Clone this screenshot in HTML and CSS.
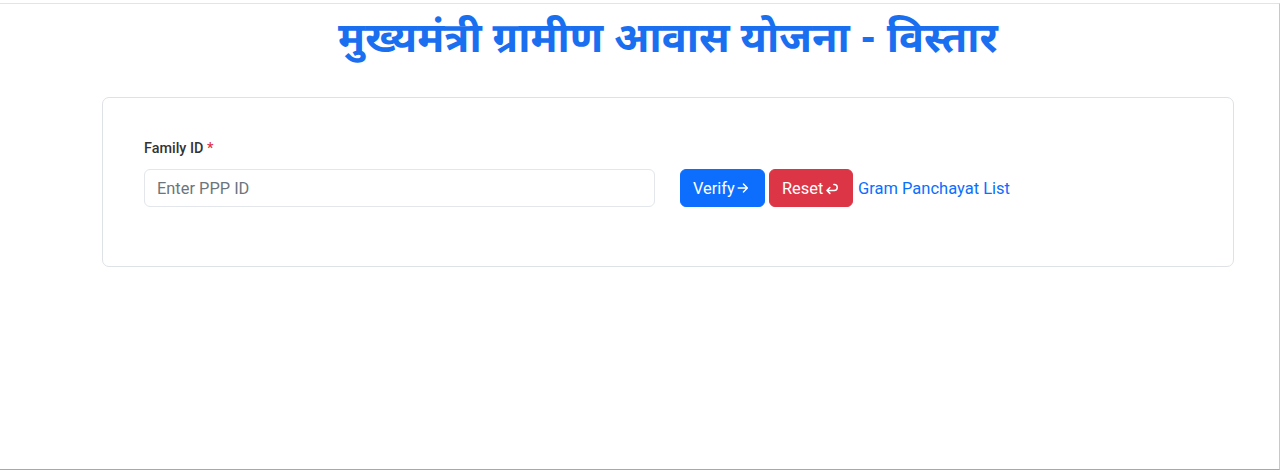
FILE: index.html
```html
<!DOCTYPE html>
<html lang="hi">
<head>
<meta charset="utf-8">
<title>मुख्यमंत्री ग्रामीण आवास योजना - विस्तार</title>
<link rel="stylesheet" href="styles.css">
</head>
<body>
<div class="frame">
  <h1 class="title">मुख्यमंत्री ग्रामीण आवास योजना - विस्तार</h1>
  <div class="card">
    <label class="label" for="ppp">Family ID <span class="req">*</span></label>
    <div class="row">
      <input id="ppp" class="input" type="text" placeholder="Enter PPP ID">
      <div class="actions">
        <button class="btn btn-blue">Verify<svg class="ic" viewBox="0 0 16 16" width="14" height="14"><path d="M2.5 8h10M8.5 3.5 13 8l-4.5 4.5" fill="none" stroke="currentColor" stroke-width="1.6" stroke-linecap="round" stroke-linejoin="round"/></svg></button>
        <button class="btn btn-red">Reset<svg class="ic" viewBox="0 0 16 16" width="16" height="16"><path d="M10 4.5h0.5a3 3 0 0 1 0 6H3M6 7.5 3 10.5l3 3" fill="none" stroke="currentColor" stroke-width="1.5" stroke-linecap="round" stroke-linejoin="round"/></svg></button>
        <a class="link" href="#">Gram Panchayat List</a>
      </div>
    </div>
  </div>
</div>
</body>
</html>
```
FILE: styles.css
```css
html, body {
  margin: 0;
  padding: 0;
  background: #fff;
}
body {
  font-family: Roboto, "Liberation Sans", sans-serif;
  color: #212529;
}
.frame {
  width: 1279px;
  height: 465px;
  margin-top: 3px;
  border-top: 1px solid #e4e2f2;
  border-right: 1px solid #c8c8c8;
  border-bottom: 1px solid #a8a8a8;
  box-sizing: content-box;
  overflow: hidden;
}
.title {
  margin: 12px 0 0 102px;
  width: 1132px;
  text-align: center;
  font-family: "Noto Sans Devanagari", "Noto Sans", "Lohit Devanagari", sans-serif;
  font-weight: 700;
  font-size: 41.6px;
  line-height: 52px;
  color: #1a6ff0;
}
.card {
  margin: 29px 0 0 102px;
  width: 1132px;
  height: 170px;
  box-sizing: border-box;
  border: 1px solid #dee2e6;
  border-radius: 7px;
  padding: 41px 41px 0;
}
.label {
  display: block;
  font-size: 14.4px;
  font-weight: 500;
  color: #333;
  line-height: 20px;
  margin-bottom: 10px;
}
.req { color: #dc3545; }
.row {
  display: flex;
  align-items: center;
}
.input {
  width: 511px;
  height: 38px;
  box-sizing: border-box;
  border: 1px solid #e3e6ea;
  border-radius: 6px;
  padding: 0 12px;
  font-family: Roboto, "Liberation Sans", sans-serif;
  font-size: 16.4px;
  color: #212529;
  outline: none;
}
.input::placeholder { color: #6c757d; }
.actions {
  display: flex;
  align-items: center;
  gap: 4px;
  margin-left: 25px;
}
.btn {
  display: inline-flex;
  align-items: center;
  height: 38px;
  box-sizing: border-box;
  border: 1px solid transparent;
  border-radius: 6px;
  padding: 0 12px;
  font-family: Roboto, "Liberation Sans", sans-serif;
  font-size: 16.4px;
  color: #fff;
}
.btn-blue { background: #0d6efd; border-color: #0d6efd; width: 85px; }
.btn-red { background: #dc3545; border-color: #dc3545; width: 84px; }
.ic { margin-left: 1px; }
.link {
  color: #0d6efd;
  text-decoration: none;
  font-size: 16.5px;
  margin-left: 1px;
}
```
